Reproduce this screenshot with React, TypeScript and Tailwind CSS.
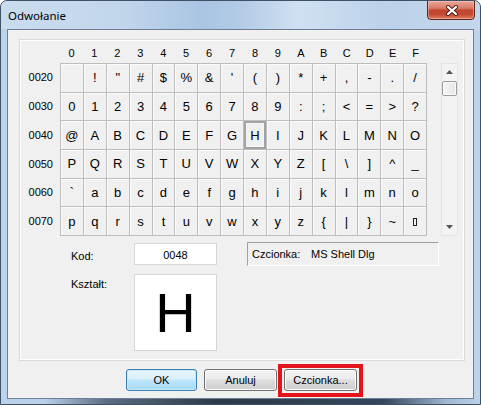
import React from "react";

const HEX = "0123456789ABCDEF".split("");
const ROWS = ["0020", "0030", "0040", "0050", "0060", "0070"];

function Cell({ code }: { code: number }) {
  const selected = code === 0x48;
  let content: React.ReactNode = code === 0x20 ? "" : String.fromCharCode(code);
  if (code === 0x7f) {
    content = <span className="inline-block w-[4px] h-[8px] border border-[#222] mt-[1px]" />;
  }
  return (
    <div
      className={
        "flex items-center justify-center border-r border-b border-[#bdbdbd] bg-[#f0f0f0] text-[13px] text-black leading-none " +
        (selected
          ? "shadow-[inset_0_0_0_2px_#a3a3a3,inset_0_0_0_3px_#f7f7f7]"
          : "shadow-[inset_1px_1px_0_#fbfbfb]")
      }
    >
      {content}
    </div>
  );
}

function Button({ children, def, w }: { children: React.ReactNode; def?: boolean; w: string }) {
  return (
    <div
      className={
        "h-[22px] flex items-center justify-center rounded-[3px] border text-[11px] text-black " +
        w +
        " " +
        (def
          ? "border-[#3c7fb1] bg-[linear-gradient(180deg,#eaf6fd_0%,#d9f0fc_45%,#bee6fd_50%,#a7d9f5_100%)] shadow-[inset_0_0_0_1px_#c9e9fb]"
          : "border-[#707070] bg-[linear-gradient(180deg,#f2f2f2_0%,#ebebeb_45%,#dddddd_50%,#cfcfcf_100%)] shadow-[inset_0_0_0_1px_#fcfcfc]")
      }
    >
      {children}
    </div>
  );
}

export default function App() {
  return (
    <div className="w-[481px] h-[405px] bg-white">
      <div className="relative w-[481px] h-[405px] rounded-t-[7px] border border-[#3e5166] bg-[#bcd3ea] flex flex-col font-['Liberation_Sans',Arial,sans-serif] overflow-hidden">
        {/* title bar */}
        <div className="h-[28px] flex items-start justify-between rounded-t-[6px] bg-[linear-gradient(90deg,#cadcee_0%,#c2d6eb_25%,#a9c5e3_42%,#b2cbe6_50%,#cfe0f1_62%,#bcd2ea_80%,#c3d7ec_100%)]">
          <div className="pl-[7px] pt-[6px] text-[11.5px] text-black font-['Noto_Sans',sans-serif]">Odwołanie</div>
          <div className="mr-[5px] -mt-[1px] w-[48px] h-[20px] rounded-b-[4px] border border-[#5e2519] flex items-center justify-center bg-[linear-gradient(180deg,#e9a99b_0%,#d87a66_40%,#c2442c_52%,#c44a32_75%,#dd7f63_100%)] shadow-[inset_0_0_0_1px_rgba(255,200,190,0.5)]">
            <svg width="14" height="11" viewBox="0 0 14 11" className="ml-[2px]">
              <path d="M3 2 L11 9 M11 2 L3 9" stroke="#4a2018" strokeWidth="4" strokeLinecap="round" />
              <path d="M3 2 L11 9 M11 2 L3 9" stroke="#ffffff" strokeWidth="2.2" strokeLinecap="round" />
            </svg>
          </div>
        </div>

        {/* client area */}
        <div className="ml-[6px] w-[467px] h-[370px] border border-[#6c7f96] bg-[#f0f0f0] flex flex-col">
          {/* panel */}
          <div className="ml-[12px] mt-[10px] w-[444px] h-[320px] border border-white shadow-[0_0_0_1px_#dadada] flex flex-col">
            {/* header */}
            <div className="h-[22px] flex pt-[4px]">
              <div className="w-[39px]" />
              <div className="w-[367px] grid grid-cols-16 text-[11px] text-black">
                {HEX.map((h) => (
                  <div key={h} className="text-center">
                    {h}
                  </div>
                ))}
              </div>
            </div>
            {/* body */}
            <div className="flex h-[173px]">
              <div className="w-[39px] flex flex-col pr-[7px] text-[11px] text-black">
                {ROWS.map((r) => (
                  <div key={r} className="flex-1 flex items-center justify-end">
                    {r}
                  </div>
                ))}
              </div>
              <div className="w-[367px] h-[173px] grid grid-cols-16 grid-rows-6 border-l border-t border-[#bdbdbd]">
                {Array.from({ length: 96 }, (_, i) => (
                  <Cell key={i} code={0x20 + i} />
                ))}
              </div>
              <div className="ml-[14px] w-[17px] h-[173px] border border-[#e4e4e4] bg-[#f3f3f3] flex flex-col items-center">
                <div className="h-[16px] w-full flex items-center justify-center">
                  <svg width="7" height="4" viewBox="0 0 7 4">
                    <path d="M0 4 L3.5 0 L7 4 Z" fill="#555" />
                  </svg>
                </div>
                <div className="mt-[1px] w-[15px] h-[15px] rounded-[2px] border border-[#9a9a9a] bg-[linear-gradient(90deg,#f5f5f5,#e6e6e6)] shadow-[inset_0_0_0_1px_#fdfdfd]" />
                <div className="flex-1" />
                <div className="h-[16px] w-full flex items-center justify-center">
                  <svg width="7" height="4" viewBox="0 0 7 4">
                    <path d="M0 0 L7 0 L3.5 4 Z" fill="#555" />
                  </svg>
                </div>
              </div>
            </div>
            {/* Kod row */}
            <div className="mt-[6px] h-[24px] flex items-start">
              <div className="pl-[50px] w-[113px] pt-[6px] text-[11px] text-black">Kod:</div>
              <div className="mt-[1px] w-[83px] h-[22px] border border-[#d6d6d6] bg-white flex justify-center pt-[3px] text-[11px] text-black">
                0048
              </div>
              <div className="ml-[30px] w-[192px] h-[24px] border-t border-l border-[#a0a0a0] border-b border-r border-b-white border-r-white flex items-center pl-[4px] text-[11px] text-black">
                <span className="w-[59px]">Czcionka:</span>
                <span>MS Shell Dlg</span>
              </div>
            </div>
            {/* Kształt row */}
            <div className="mt-[8px] flex items-start">
              <div className="pl-[50px] w-[113px] pt-[2px] text-[11px] text-black">Kształt:</div>
              <div className="w-[83px] h-[77px] border border-[#d6d6d6] bg-white flex items-center justify-center text-[56px] leading-none text-black">
                H
              </div>
            </div>
          </div>
          {/* buttons */}
          <div className="mt-[9px] pl-[118px] flex gap-[7px]">
            <Button def w="w-[71px]">OK</Button>
            <Button w="w-[73px]">Anuluj</Button>
            <Button w="w-[73px]">Czcionka...</Button>
          </div>
        </div>

        {/* bottom frame */}
        <div className="flex-1 bg-[linear-gradient(90deg,#b9d1ea_0%,#b9d1ea_9%,#5b6d82_22%,#2c3a49_45%,#34475b_80%,#9fb8d3_93%,#b9d1ea_100%)]" />

        {/* red highlight */}
        <div className="absolute left-[277px] top-[363px] w-[85px] h-[33px] border-[4px] border-[#e3141b]" />
      </div>
    </div>
  );
}
